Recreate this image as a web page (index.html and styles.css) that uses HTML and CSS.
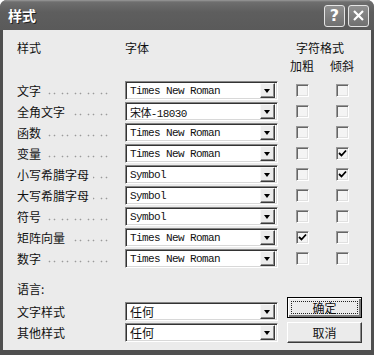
FILE: index.html
```html
<!DOCTYPE html>
<html lang="zh-CN">
<head>
    <meta charset="UTF-8">
    <title>样式</title>
    <link rel="stylesheet" href="styles.css">
</head>
<body>
    <div class="window">
        <div class="titlebar">
            <span class="title">样式</span>
            <div class="caption-btns">
                <span class="cap-btn">?</span>
                <span class="cap-btn">
                    <svg width="13" height="13" viewBox="0 0 13 13"><path d="M2 2 L11 11 M11 2 L2 11" stroke="#fff" stroke-width="2.2" fill="none"/></svg>
                </span>
            </div>
        </div>

        <div class="panel">
            <div class="head">
                <div class="col-label">样式</div>
                <div class="col-font">字体</div>
                <div class="col-fmt">
                    <div>字符格式</div>
                    <div class="fmt-sub"><span>加粗</span><span>倾斜</span></div>
                </div>
            </div>

            <div class="row">
                <div class="col-label"><span>文字</span><span class="dots"></span></div>
                <div class="select"><span class="val">Times New Roman</span><span class="arrow"></span></div>
                <span class="cell"><span class="check"></span></span>
                <span class="cell"><span class="check"></span></span>
            </div>
            <div class="row">
                <div class="col-label"><span>全角文字</span><span class="dots"></span></div>
                <div class="select"><span class="val">宋体-18030</span><span class="arrow"></span></div>
                <span class="cell"><span class="check"></span></span>
                <span class="cell"><span class="check"></span></span>
            </div>
            <div class="row">
                <div class="col-label"><span>函数</span><span class="dots"></span></div>
                <div class="select"><span class="val">Times New Roman</span><span class="arrow"></span></div>
                <span class="cell"><span class="check"></span></span>
                <span class="cell"><span class="check"></span></span>
            </div>
            <div class="row">
                <div class="col-label"><span>变量</span><span class="dots"></span></div>
                <div class="select"><span class="val">Times New Roman</span><span class="arrow"></span></div>
                <span class="cell"><span class="check"></span></span>
                <span class="cell"><span class="check on"><svg width="9" height="9" viewBox="0 0 9 9"><path d="M1 4 L3.5 6.5 L8 1.5" stroke="#000" stroke-width="1.8" fill="none"/></svg></span></span>
            </div>
            <div class="row">
                <div class="col-label"><span>小写希腊字母</span><span class="dots"></span></div>
                <div class="select"><span class="val">Symbol</span><span class="arrow"></span></div>
                <span class="cell"><span class="check"></span></span>
                <span class="cell"><span class="check on"><svg width="9" height="9" viewBox="0 0 9 9"><path d="M1 4 L3.5 6.5 L8 1.5" stroke="#000" stroke-width="1.8" fill="none"/></svg></span></span>
            </div>
            <div class="row">
                <div class="col-label"><span>大写希腊字母</span><span class="dots"></span></div>
                <div class="select"><span class="val">Symbol</span><span class="arrow"></span></div>
                <span class="cell"><span class="check"></span></span>
                <span class="cell"><span class="check"></span></span>
            </div>
            <div class="row">
                <div class="col-label"><span>符号</span><span class="dots"></span></div>
                <div class="select"><span class="val">Symbol</span><span class="arrow"></span></div>
                <span class="cell"><span class="check"></span></span>
                <span class="cell"><span class="check"></span></span>
            </div>
            <div class="row">
                <div class="col-label"><span>矩阵向量</span><span class="dots"></span></div>
                <div class="select"><span class="val">Times New Roman</span><span class="arrow"></span></div>
                <span class="cell"><span class="check on"><svg width="9" height="9" viewBox="0 0 9 9"><path d="M1 4 L3.5 6.5 L8 1.5" stroke="#000" stroke-width="1.8" fill="none"/></svg></span></span>
                <span class="cell"><span class="check"></span></span>
            </div>
            <div class="row">
                <div class="col-label"><span>数字</span><span class="dots"></span></div>
                <div class="select"><span class="val">Times New Roman</span><span class="arrow"></span></div>
                <span class="cell"><span class="check"></span></span>
                <span class="cell"><span class="check"></span></span>
            </div>

            <div class="bottom">
                <div class="lang">
                    <div class="lang-title">语言:</div>
                    <div class="row">
                        <div class="col-label">文字样式</div>
                        <div class="select"><span class="val cjk">任何</span><span class="arrow"></span></div>
                    </div>
                    <div class="row">
                        <div class="col-label">其他样式</div>
                        <div class="select"><span class="val cjk">任何</span><span class="arrow"></span></div>
                    </div>
                </div>
                <div class="actions">
                    <button class="btn default"><span class="focus">确定</span></button>
                    <button class="btn">取消</button>
                </div>
            </div>
        </div>
    </div>
</body>
</html>
```

FILE: styles.css
```css
body {
    margin: 0;
    background: #fff;
    font-family: "Noto Sans CJK SC", sans-serif;
    font-size: 12px;
    color: #111;
}

.window {
    width: 374px;
    height: 355px;
    display: flex;
    flex-direction: column;
    background: #4f4f4f;
    border-radius: 7px 7px 0 0;
    overflow: hidden;
}

.titlebar {
    height: 30px;
    flex: none;
    display: flex;
    align-items: center;
    justify-content: space-between;
    padding: 0 5px 0 8px;
    background: linear-gradient(#9a9a9a 0, #6e6e6e 2px, #5e5e5e 40%, #5a5a5a 100%);
}

.title {
    color: #fff;
    font-weight: bold;
    font-size: 14px;
    text-shadow: 1px 1px 0 #222;
}

.caption-btns {
    display: flex;
    gap: 3px;
    margin-top: 1px;
}

.cap-btn {
    width: 19px;
    height: 20px;
    border: 1px solid #e4e4e4;
    border-radius: 3px;
    background: linear-gradient(#909090, #707070);
    color: #fff;
    font-family: "DejaVu Sans", sans-serif;
    font-weight: bold;
    font-size: 16px;
    display: flex;
    align-items: center;
    justify-content: center;
}

.panel {
    flex: 1;
    margin: 0 3px 5px;
    background: #ebebeb;
    padding: 10px 0 0 14px;
}

.head {
    display: flex;
    line-height: 16px;
    margin-bottom: 7px;
}

.col-label {
    width: 108px;
    flex: none;
    display: flex;
    padding-right: 12px;
    box-sizing: border-box;
    white-space: nowrap;
}

.col-font {
    width: 153px;
    flex: none;
}

.col-fmt {
    width: 84px;
    text-align: center;
}

.fmt-sub {
    display: flex;
    padding-left: 4px;
    margin-top: 2px;
}

.fmt-sub span {
    width: 40px;
    text-align: center;
}

/* dot leaders after the style names */
.dots {
    flex: 1;
    margin-left: 4px;
    height: 13px;
    background:
        radial-gradient(circle, #999 0.7px, transparent 1.1px) right 0 bottom 0 / 13px 3px repeat-x,
        radial-gradient(circle, #999 0.7px, transparent 1.1px) right 5px bottom 0 / 13px 3px repeat-x;
}

.row {
    display: flex;
    align-items: center;
    height: 19px;
    margin-bottom: 2px;
}

.select {
    width: 153px;
    height: 19px;
    flex: none;
    box-sizing: border-box;
    display: flex;
    align-items: center;
    justify-content: space-between;
    background: #fff;
    border: 1px solid;
    border-color: #868686 #fff #fff #868686;
    box-shadow: inset 1px 1px 0 #333, inset -1px -1px 0 #d8d8d8;
    padding: 2px 2px 2px 4px;
}

.val {
    font-family: "Liberation Mono", "Noto Sans CJK SC", monospace;
    font-size: 11px;
    letter-spacing: -0.6px;
    white-space: nowrap;
}

.val.cjk {
    font-family: "Noto Sans CJK SC", sans-serif;
    font-size: 12px;
    letter-spacing: 0;
}

.arrow {
    width: 15px;
    height: 15px;
    box-sizing: border-box;
    position: relative;
    background: #ececec;
    border: 1px solid;
    border-color: #f8f8f8 #3a3a3a #3a3a3a #f8f8f8;
    box-shadow: inset -1px -1px 0 #8a8a8a;
}

.arrow::after {
    content: "";
    position: absolute;
    left: 3px;
    top: 5px;
    border-left: 3.5px solid transparent;
    border-right: 3.5px solid transparent;
    border-top: 4px solid #000;
}

.cell {
    width: 40px;
    display: flex;
    justify-content: center;
}

.cell:first-of-type {
    margin-left: 4px;
}

.check {
    width: 13px;
    height: 13px;
    box-sizing: border-box;
    display: flex;
    align-items: center;
    justify-content: center;
    background: #f4f4f4;
    border: 1px solid;
    border-color: #999 #fff #fff #999;
    box-shadow: inset 1px 1px 0 #666, inset -1px -1px 0 #e0e0e0;
}

.bottom {
    display: flex;
}

.lang-title {
    line-height: 16px;
    margin: 11px 0 5px;
}

.lang .row .col-label {
    padding-right: 0;
}

.actions {
    margin: 27px 0 0 9px;
    display: flex;
    flex-direction: column;
    gap: 4px;
}

.btn {
    width: 75px;
    height: 21px;
    box-sizing: border-box;
    padding: 0;
    font-family: "Noto Sans CJK SC", sans-serif;
    font-size: 12px;
    color: #111;
    background: #ebebeb;
    border: 1px solid;
    border-color: #fff #3a3a3a #3a3a3a #fff;
    box-shadow: inset -1px -1px 0 #8a8a8a;
    display: flex;
    align-items: center;
    justify-content: center;
}

.btn.default {
    border: 1px solid #000;
    box-shadow: inset 1px 1px 0 #fff, inset -2px -2px 0 #7a7a7a;
    padding: 3px;
}

.focus {
    flex: 1;
    align-self: stretch;
    display: flex;
    align-items: center;
    justify-content: center;
    border: 1px dotted #222;
}
```
